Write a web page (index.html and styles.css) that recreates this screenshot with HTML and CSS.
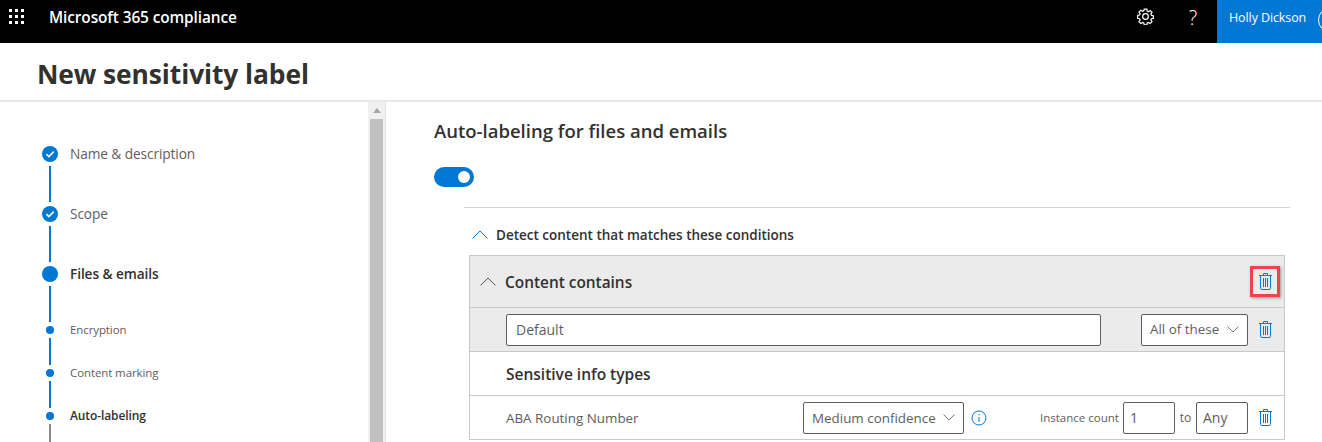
FILE: index.html
```html
<!DOCTYPE html>
<html lang="en">
<head>
<meta charset="utf-8">
<title>New sensitivity label</title>
<link rel="stylesheet" href="styles.css">
</head>
<body>
<header class="topbar">
  <svg class="waffle" width="16" height="16" viewBox="0 0 16 16"><g fill="#fff"><rect x="0" y="0" width="3" height="3"/><rect x="6" y="0" width="3" height="3"/><rect x="12" y="0" width="3" height="3"/><rect x="0" y="6" width="3" height="3"/><rect x="6" y="6" width="3" height="3"/><rect x="12" y="6" width="3" height="3"/><rect x="0" y="12" width="3" height="3"/><rect x="6" y="12" width="3" height="3"/><rect x="12" y="12" width="3" height="3"/></g></svg>
  <div class="brand">Microsoft 365 compliance</div>
  <svg class="gear" width="17" height="17" viewBox="0 0 18 18" fill="none" stroke="#fff" stroke-width="1.3"><path d="M7.6 1.2h2.8l.4 2.1 1.3.6 1.8-1.2 2 2-1.2 1.8.6 1.3 2 .4v2.8l-2 .4-.6 1.3 1.2 1.8-2 2-1.8-1.2-1.3.6-.4 2H7.6l-.4-2-1.3-.6-1.8 1.2-2-2 1.2-1.8-.6-1.3-2-.4V7.8l2-.4.6-1.3L2.1 4.3l2-2 1.8 1.2 1.3-.6z"/><circle cx="9" cy="9" r="3"/></svg>
  <div class="help">?</div>
  <div class="account"><span class="account-name">Holly Dickson</span><span class="avatar"></span></div>
</header>
<div class="titlebar"><h1 class="page-title">New sensitivity label</h1></div>
<div class="workspace">
  <nav class="sidebar">
    <ol class="steps">
      <li class="step step-big"><div class="rail"><svg class="dot-big" width="16" height="16" viewBox="0 0 16 16"><circle cx="8" cy="8" r="8" fill="#0078d4"/><path d="M4.4 8.2l2.5 2.4 4.8-5" fill="none" stroke="#fff" stroke-width="1.6"/></svg><span class="line"></span></div><span class="step-label">Name &amp; description</span></li>
      <li class="step step-big"><div class="rail"><svg class="dot-big" width="16" height="16" viewBox="0 0 16 16"><circle cx="8" cy="8" r="8" fill="#0078d4"/><path d="M4.4 8.2l2.5 2.4 4.8-5" fill="none" stroke="#fff" stroke-width="1.6"/></svg><span class="line"></span></div><span class="step-label">Scope</span></li>
      <li class="step step-big"><div class="rail"><span class="dot dot-16"></span><span class="line"></span></div><span class="step-label step-active">Files &amp; emails</span></li>
      <li class="step step-small"><div class="rail"><span class="dot dot-8"></span><span class="line"></span></div><span class="step-label step-sub">Encryption</span></li>
      <li class="step step-small"><div class="rail"><span class="dot dot-8"></span><span class="line"></span></div><span class="step-label step-sub">Content marking</span></li>
      <li class="step step-small"><div class="rail"><span class="dot dot-8"></span><span class="line line-grey"></span></div><span class="step-label step-sub step-active">Auto-labeling</span></li>
    </ol>
  </nav>
  <div class="scrollbar"><svg class="scroll-up" width="8" height="5" viewBox="0 0 8 5"><path d="M4 0l4 5H0z" fill="#a6a6a6"/></svg><div class="scroll-thumb"></div></div>
  <main class="content">
    <h2 class="section-title">Auto-labeling for files and emails</h2>
    <div class="toggle"><span class="knob"></span></div>
    <section class="conditions">
      <div class="detect">
        <svg width="16" height="9" viewBox="0 0 16 9" fill="none" stroke="#0078d4" stroke-width="1"><path d="M.5 8.5L8 1l7.5 7.5"/></svg>
        <span>Detect content that matches these conditions</span>
      </div>
      <div class="group">
        <div class="group-head">
          <svg width="16" height="9" viewBox="0 0 16 9" fill="none" stroke="#555" stroke-width="1"><path d="M.5 8.5L8 1l7.5 7.5"/></svg>
          <span class="group-name">Content contains</span>
          <span class="highlight"><svg class="trash" width="13" height="17" viewBox="0 0 13 17" fill="none" stroke="#0078d4"><path d="M0 2.5h13M1.5 2.5v12.7c0 .7.5 1.3 1.2 1.3h7.6c.7 0 1.2-.6 1.2-1.3V2.5M4.5 2.5V.5h4v2M4.5 5v9M6.5 5v9M8.5 5v9"/></svg></span>
        </div>
        <div class="row row-name">
          <div class="field field-name">Default</div>
          <div class="field field-select field-all">All of these<svg class="chev" width="12" height="7" viewBox="0 0 12 7" fill="none" stroke="#777"><path d="M.5.5L6 6l5.5-5.5"/></svg></div>
          <svg class="trash" width="13" height="17" viewBox="0 0 13 17" fill="none" stroke="#0078d4"><path d="M0 2.5h13M1.5 2.5v12.7c0 .7.5 1.3 1.2 1.3h7.6c.7 0 1.2-.6 1.2-1.3V2.5M4.5 2.5V.5h4v2M4.5 5v9M6.5 5v9M8.5 5v9"/></svg>
        </div>
        <div class="row row-title">Sensitive info types</div>
        <div class="row row-item">
          <span class="item-name">ABA Routing Number</span>
          <div class="field field-select field-conf">Medium confidence<svg class="chev" width="12" height="7" viewBox="0 0 12 7" fill="none" stroke="#777"><path d="M.5.5L6 6l5.5-5.5"/></svg></div>
          <svg class="info" width="16" height="16" viewBox="0 0 16 16" fill="none" stroke="#0078d4"><circle cx="8" cy="8" r="7"/><path d="M8 7v5M8 4v1.5"/></svg>
          <span class="count-label">Instance count</span>
          <div class="field field-count">1</div>
          <span class="to">to</span>
          <div class="field field-count">Any</div>
          <svg class="trash" width="13" height="17" viewBox="0 0 13 17" fill="none" stroke="#0078d4"><path d="M0 2.5h13M1.5 2.5v12.7c0 .7.5 1.3 1.2 1.3h7.6c.7 0 1.2-.6 1.2-1.3V2.5M4.5 2.5V.5h4v2M4.5 5v9M6.5 5v9M8.5 5v9"/></svg>
        </div>
      </div>
    </section>
  </main>
</div>
</body>
</html>
```
FILE: styles.css
```css
* { box-sizing: border-box; }
html, body { margin: 0; padding: 0; height: 100%; overflow: hidden; background: #fff; }
body { font-family: "Open Sans", "Noto Sans", sans-serif; color: #323130; width: 1322px; height: 442px; display: flex; flex-direction: column; }

.topbar { height: 43px; flex: none; background: #000; color: #fff; display: flex; align-items: flex-start; }
.waffle { margin: 9px 0 0 9px; flex: none; }
.brand { margin: 7px 0 0 24px; font-size: 15.4px; line-height: 21px; font-weight: 600; letter-spacing: -0.1px; white-space: nowrap; }
.gear { margin: 8px 0 0 auto; flex: none; }
.help { margin: 4px 18px 0 33px; font-size: 20px; line-height: 28px; font-weight: 300; width: 12px; text-align: center; }
.account { width: 105px; height: 43px; background: #0078d4; display: flex; align-items: flex-start; padding: 9px 0 0 12px; overflow: hidden; font-size: 12.5px; white-space: nowrap; letter-spacing: -0.1px; }
.avatar { flex: none; margin-left: 12px; margin-top: -2px; width: 26px; height: 26px; border: 1px solid #fff; border-radius: 50%; }

.titlebar { height: 59px; flex: none; border-bottom: 2px solid #e8e8e8; padding: 13px 0 0 37px; }
.page-title { margin: 0; font-size: 26.4px; line-height: 36px; font-weight: 700; letter-spacing: -0.1px; color: #323130; }

.workspace { flex: 1; display: flex; min-height: 0; }
.sidebar { width: 368px; flex: none; padding: 44px 0 0 42px; overflow: hidden; }
.steps { list-style: none; margin: 0; padding: 0; }
.step { display: flex; align-items: flex-start; }
.step-big { height: 60px; }
.step-small { height: 43px; }
.rail { width: 16px; flex: none; display: flex; flex-direction: column; align-items: center; }
.dot-big { display: block; flex: none; }
.dot { display: block; border-radius: 50%; background: #0078d4; flex: none; }
.dot-16 { width: 16px; height: 16px; }
.dot-8 { width: 8px; height: 8px; }
.line { display: block; width: 2px; background: #0078d4; margin-top: 4px; }
.step-big .line { height: 36px; }
.step-small .line { height: 27px; }
.line-grey { background: #8a8886; }
.step-label { margin-left: 12px; font-size: 13.7px; line-height: 16px; color: #605e5c; letter-spacing: -0.1px; white-space: nowrap; }
.step-sub { font-size: 11.5px; line-height: 8px; }
.step-active { color: #323130; font-weight: 600; }
.step-sub.step-active { font-size: 12px; }

.scrollbar { width: 18px; flex: none; background: #f0f0f0; border-right: 1px solid #e3e3e3; padding: 6px 2px 0 2px; display: flex; flex-direction: column; align-items: center; }
.scroll-up { flex: none; }
.scroll-thumb { margin-top: 6px; width: 13px; flex: 1; background: #c0c0c0; }

.content { flex: 1; min-width: 0; padding: 16px 32px 0 48px; }
.section-title { margin: 0; font-size: 18.5px; line-height: 26px; font-weight: 600; color: #323130; }
.toggle { margin-top: 23px; width: 40px; height: 20px; border-radius: 10px; background: #0078d4; display: flex; align-items: center; justify-content: flex-end; padding-right: 4px; }
.knob { width: 12px; height: 12px; border-radius: 50%; background: #fff; }

.conditions { margin: 20px 0 0 30px; border-top: 1px solid #d2d2d2; }
.detect { display: flex; align-items: center; gap: 8px; height: 47px; padding: 6px 0 0 8px; font-size: 13.5px; font-weight: 600; white-space: nowrap; }
.group { margin-left: 5px; margin-right: 5px; border: 1px solid #c8c8c8; border-bottom: 0; }
.group-head { height: 52px; background: #ebebeb; display: flex; align-items: center; padding: 0 4px 0 10px; border-bottom: 1px solid #c8c8c8; }
.group-name { margin-left: 9px; padding-top: 1px; font-size: 15.4px; font-weight: 600; }
.highlight { margin-left: auto; width: 30px; height: 31px; border: 3px solid #f3424a; box-shadow: 1px 1px 3px rgba(0,0,0,.35); display: flex; align-items: center; justify-content: center; }
.row { display: flex; align-items: center; border-bottom: 1px solid #c8c8c8; }
.row-name { height: 44px; background: #ebebeb; padding-left: 36px; }
.row-title { height: 44px; padding-left: 36px; font-size: 15.5px; font-weight: 600; }
.row-item { height: 44px; padding-left: 36px; }
.field { height: 32px; border: 1px solid #605e5c; border-radius: 2px; background: #fff; display: flex; align-items: center; padding: 0 8px; font-size: 13.4px; color: #605e5c; white-space: nowrap; }
.field-name { width: 595px; padding-left: 9px; font-size: 14px; }
.field-select { justify-content: space-between; }
.field-all { width: 107px; margin-left: 40px; padding-bottom: 1px; }
.trash { flex: none; display: block; }
.row-name > .trash { margin-left: 11px; }
.chev { flex: none; margin-left: 6px; }
.item-name { width: 297px; font-size: 13.4px; color: #605e5c; white-space: nowrap; }
.field-conf { width: 161px; }
.info { margin-left: 7px; flex: none; }
.count-label { margin-left: 53px; font-size: 11.5px; color: #605e5c; width: 83px; white-space: nowrap; }
.field-count { width: 52px; padding-left: 6px; font-size: 14px; }
.to { width: 21px; text-align: center; font-size: 12px; color: #605e5c; }
.row-item > .trash { margin-left: 11px; }
```
